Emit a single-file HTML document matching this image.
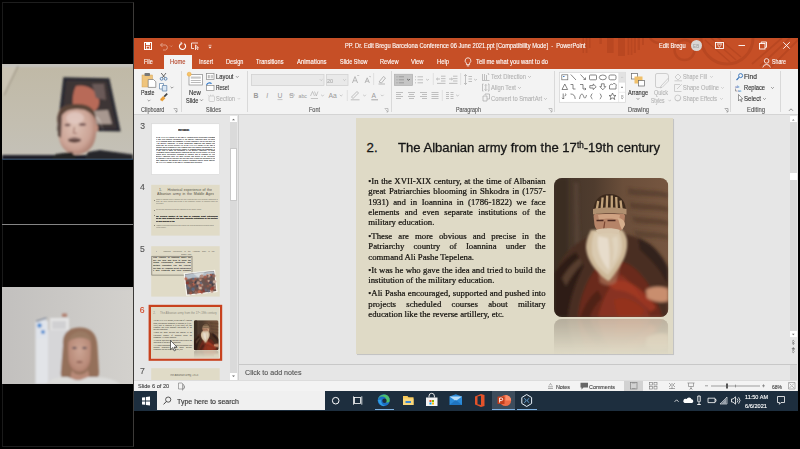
<!DOCTYPE html>
<html><head><meta charset="utf-8">
<style>
*{margin:0;padding:0;box-sizing:border-box}
html,body{width:800px;height:449px;background:#000;overflow:hidden;position:relative;font-family:"Liberation Sans",sans-serif}
.a{position:absolute}
.t{position:absolute;white-space:nowrap;line-height:1;transform-origin:0 50%;-webkit-text-stroke-width:0.12px}
#scr{left:134px;top:38px;width:664px;height:373px;background:#e6e6e6;overflow:hidden;filter:blur(0.3px)}
svg{display:block}
.sep{position:absolute;width:1px;background:#d9d9d9;top:33px;height:41px}
.sl{position:absolute;white-space:nowrap;line-height:1;font-family:"Liberation Serif",serif;color:#14120e;-webkit-text-stroke:0.22px #14120e;transform:scaleY(1.06);transform-origin:0 84%}
</style></head>
<body>
<div class="a" style="left:2px;top:2px;width:132px;height:445px;border-left:1.5px solid #1a1a1a;border-top:1px solid #1e1e1e;border-bottom:1px solid #1e1e1e;border-right:1px solid #3c3a38"></div>
<div class="a" style="left:2px;top:224px;width:131px;height:1px;background:#858585"></div>
<!-- VIDEO 1 -->
<svg class="a" style="left:2px;top:64px" width="131" height="96" viewBox="2 64 131 96">
  <defs>
    <filter id="vb" x="-10%" y="-10%" width="120%" height="120%"><feGaussianBlur stdDeviation="0.8"/></filter>
    <filter id="vb2" x="-10%" y="-10%" width="120%" height="120%"><feGaussianBlur stdDeviation="1.6"/></filter>
    <linearGradient id="w1" x1="0" y1="0" x2="0" y2="1">
      <stop offset="0" stop-color="#c0b9a6"/><stop offset="0.6" stop-color="#c3beb0"/><stop offset="1" stop-color="#c4c1b8"/>
    </linearGradient>
    <radialGradient id="face1" cx="0.45" cy="0.45" r="0.6">
      <stop offset="0" stop-color="#dcc0b4"/><stop offset="0.7" stop-color="#cca496"/><stop offset="1" stop-color="#a87a6c"/>
    </radialGradient>
  </defs>
  <rect x="2" y="64" width="131" height="96" fill="url(#w1)"/>
  <g filter="url(#vb)">
    <path d="M2 64 H18 L4 95 H2 Z" fill="#cbc4b4"/>
    <rect x="2" y="64" width="131" height="2.8" fill="#c4c4c2"/>
    <path d="M18 66 L4 95" stroke="#8f8676" stroke-width="1"/>
    <!-- frame -->
    <path d="M63.3 77.2 L109.4 78.2 L120.7 131.5 L57.2 130.5 Z" fill="#2a2a30"/>
    <path d="M66.5 80.5 L106.5 81.3 L116.5 128.5 L61 127.6 Z" fill="#3e3434"/>
    <path d="M76 86 C84 84 94 88 98 96 C101 104 98 110 92 112 L74 113 C72 104 72 94 76 86 Z" fill="#b86a58"/>
    <path d="M92 84 L104 84 L106 100 L96 98 Z" fill="#6a5a58"/>
    <path d="M90 111 L108 110 L112 124 L90 124 Z" fill="#a89890"/>
    <!-- head -->
    <path d="M74 110 C84 108 94 112 100 120 L104 132 L100 122 C94 114 84 112 74 113 Z" fill="#d8d0c8" opacity="0.8"/>
    <path d="M57.5 120 C57 108 64 104.5 77 104.5 C90 104.5 95.5 110 96 120 L96 134 C95 146 88 154 77 154.5 C66 154.5 59 146 58.5 134 Z" fill="url(#face1)"/>
    <path d="M57.5 122 C57 108 64 104 77 104 C90 104 95.5 109 96 120 C92 112 85 109 77 109 C68 109 61 112 58.5 124 Z" fill="#5a4438"/>
    <path d="M57.5 116 L58 136 L61 138 L62 114 Z" fill="#5a4640"/>
    <ellipse cx="75" cy="118" rx="9" ry="6" fill="#e4ccc4" opacity="0.7"/>
    <ellipse cx="96" cy="128" rx="2.2" ry="4" fill="#c09080"/>
    <ellipse cx="67.5" cy="125" rx="3" ry="1.2" fill="#6a4a48"/>
    <ellipse cx="82.5" cy="124.5" rx="3.6" ry="1.2" fill="#6a4a48"/>
    <path d="M74.5 127 L73.5 133 L77 133.5" fill="none" stroke="#9a6a60" stroke-width="1.1"/>
    <ellipse cx="74.5" cy="140" rx="6.5" ry="2.6" fill="#4a2a28"/>
    <path d="M69 139 H80" stroke="#d8c0b8" stroke-width="0.8"/>
    <path d="M64 153 C70 158 84 158 91 153 L94 160 H62 Z" fill="#c09484"/>
    <!-- bottom dark -->
    <path d="M2 155 H133 V160 H2 Z" fill="#1c1f26"/>
    <path d="M56 154 L72 152 L77 160 L50 160 Z" fill="#222"/>
    <path d="M88 152 L100 150 L133 154.5 V160 H84 Z" fill="#26262c"/>
  </g>
  <rect x="2" y="158.6" width="131" height="1.4" fill="#2a4058"/>
</svg>
<!-- VIDEO 2 -->
<svg class="a" style="left:2px;top:287px" width="131" height="97" viewBox="2 287 131 97">
  <defs>
    <linearGradient id="w2" x1="0" y1="0" x2="1" y2="0">
      <stop offset="0" stop-color="#c2c0be"/><stop offset="0.5" stop-color="#cac8c5"/><stop offset="1" stop-color="#d3d1cd"/>
    </linearGradient>
    <radialGradient id="face2" cx="0.5" cy="0.45" r="0.6">
      <stop offset="0" stop-color="#cca594"/><stop offset="0.8" stop-color="#b88a78"/><stop offset="1" stop-color="#a07060"/>
    </radialGradient>
  </defs>
  <rect x="2" y="287" width="131" height="97" fill="url(#w2)"/>
  <g filter="url(#vb)">
    <rect x="2" y="287" width="131" height="1.5" fill="#c8c6c4"/>
    <!-- shelf / appliance -->
    <rect x="50" y="318" width="19" height="12" fill="#e4e4e4"/>
    <rect x="52" y="321" width="14" height="8" fill="#d0d0d2"/>
    <rect x="62" y="313.5" width="5" height="3.5" fill="#b08070"/>
    <rect x="47" y="330" width="22" height="54" fill="#d6d6d8"/>
    <rect x="35.5" y="321" width="12.5" height="63" fill="#e2e4e8"/>
    <path d="M36 321 L46 317.5 L47 338 L36 339 Z" fill="#dfe3ea"/>
    <circle cx="39.5" cy="325.5" r="2.2" fill="#4a8ad0"/>
    <circle cx="43" cy="332" r="2" fill="#4a8ad0"/>
    <path d="M36 321.5 L46.5 318" stroke="#3a4a66" stroke-width="1"/>
    <!-- hair -->
    <path d="M63 345 C62 332 70 327.5 80 327.5 C91 327.5 97 334 97.5 346 L99 372 C99 378 96 380 92 380 L66 380 C62 380 60 376 61 370 Z" fill="#94705a"/>
    <!-- face -->
    <path d="M68 345 C68 337 73 333 80 333 C87 333 91 338 91 346 L90.5 360 C89.5 368 85 372 79.5 372 C73 372 69 367 68.5 360 Z" fill="url(#face2)"/>
    <path d="M68 342 C70 334 76 331.5 81 331.5 C87 331.5 91 336 91.5 342 C86 337 76 336 68 342 Z" fill="#9a7a64"/>
    <ellipse cx="74.5" cy="348" rx="2.2" ry="1" fill="#4a4050"/>
    <ellipse cx="84.5" cy="348" rx="2.2" ry="1" fill="#4a4050"/>
    <ellipse cx="79.5" cy="362" rx="3.2" ry="1" fill="#8a5a50"/>
    <path d="M72 370 C75 376 84 376 88 370 L90 380 H70 Z" fill="#b88a78"/>
    <!-- shirt -->
    <path d="M46 384 C50 378 60 376.5 68 377 L78 381 L88 377 C100 376.5 114 378 120 384 Z" fill="#dcdcda"/>
  </g>
</svg>

<div class="a" id="scr">
<!-- title bar + tabs bg -->
<div class="a" style="left:0;top:0;width:664px;height:31px;background:#c64f26"></div>
<svg class="a" style="left:440px;top:0" width="224" height="31" viewBox="0 0 224 31">
  <g fill="#b0421e" opacity="0.55">
    <rect x="8.5" y="0" width="1.5" height="15"/><rect x="11.6" y="0" width="1.9" height="15"/><rect x="14.8" y="0" width="1.8" height="10"/>
    <rect x="25.4" y="0" width="2.5" height="6"/><rect x="33" y="0" width="6.7" height="15"/><rect x="44" y="0" width="7" height="18"/>
    <rect x="53.5" y="0" width="1.9" height="17"/><rect x="56.6" y="0" width="1.9" height="17"/><rect x="59.75" y="0" width="2.2" height="15"/>
    <rect x="63.5" y="0" width="2.5" height="12"/><rect x="68" y="0" width="2" height="7"/>
  </g>
  <g fill="none" stroke="#b0421e" opacity="0.6">
    <path d="M76 0 A12 12 0 0 0 87 5" stroke-width="2.5"/>
    <circle cx="110.5" cy="12" r="10" stroke-width="2.5"/>
    <circle cx="153" cy="0" r="26" stroke-width="3"/>
    <path d="M131 2 L156 24 M137 0 L162 22 M143 -1 L167 19" stroke-width="1.6"/>
    <path d="M216 0 L186 28 M224 2 L196 30 M208 0 L178 26" stroke-width="1.8"/>
  </g>
</svg>
<!-- QAT -->
<svg class="a" style="left:8px;top:3px" width="200" height="10" viewBox="0 0 200 10">
  <g fill="none" stroke="#fff" stroke-width="1">
    <rect x="2.5" y="1.5" width="7" height="7"/>
  </g>
  <rect x="4" y="2" width="4" height="2.2" fill="#fff"/>
  <rect x="4.5" y="5.5" width="3" height="2.5" fill="none" stroke="#fff" stroke-width="0.7"/>
  <g fill="none" stroke="#e4a68e" stroke-width="0.9">
    <path d="M18.5 4 H23.5 A2.6 2.6 0 0 1 23.5 9 H21"/><path d="M20.5 2 L18.5 4 L20.5 6"/>
    <path d="M28 4.5 L29.2 5.7 L30.4 4.5" stroke-width="0.6"/>
  </g>
  <g fill="none" stroke="#fff" stroke-width="1.1" transform="translate(0.3,-0.8)">
    <path d="M39.2 3.2 A3.1 3.1 0 1 0 42 3.6"/><path d="M38.2 1.6 L39.8 3.2 L38 4.8" stroke-width="0.9"/>
  </g>
  <g fill="none" stroke="#fff" stroke-width="0.8">
    <path d="M49.5 2 H56 M49.5 2 V7.5 H52"/><path d="M53.5 4 V9 M53.5 4 L56.5 6.8 H54.5 L56 9"/>
  </g>
  <path d="M66.5 5.8 L69.5 5.8 L68 7.4 Z" fill="#fff"/><path d="M66.5 4.3 H69.5" stroke="#fff" stroke-width="0.6"/>
</svg>
<!-- avatar -->
<div class="a" style="left:557px;top:2.3px;width:11.2px;height:11.2px;border-radius:50%;background:#d9d6d4"></div>
<!-- window controls -->
<svg class="a" style="left:580px;top:2px" width="84" height="12" viewBox="0 0 84 12">
  <g fill="none" stroke="#fff" stroke-width="0.9">
    <rect x="1.5" y="2.5" width="8" height="6"/><path d="M3.6 5.2 L5.5 7 L7.4 5.2 M3 4 H8"/>
    <path d="M24.5 5.5 H31"/>
    <rect x="45.5" y="3.5" width="5.5" height="5.5"/><path d="M47.2 3.5 V2 H52.5 V7.3 H51"/>
    <path d="M69.3 2.2 L75.8 8.7 M75.8 2.2 L69.3 8.7"/>
  </g>
</svg>
<!-- home tab -->
<div class="a" style="left:30px;top:17px;width:28px;height:15px;background:#f3f3f3"></div>
<!-- lightbulb -->
<svg class="a" style="left:330px;top:19px" width="8" height="10" viewBox="0 0 8 10">
  <path d="M4 0.8 A2.9 2.9 0 0 1 5.6 6.1 V7.6 H2.4 V6.1 A2.9 2.9 0 0 1 4 0.8 Z M2.8 8.9 H5.2" fill="none" stroke="#fff" stroke-width="0.8"/>
</svg>
<!-- share icon -->
<svg class="a" style="left:628px;top:19.5px" width="10" height="10" viewBox="0 0 10 10">
  <circle cx="4.6" cy="2.9" r="2.3" fill="none" stroke="#fff" stroke-width="0.8"/>
  <path d="M0.8 9.5 A3.9 3.9 0 0 1 8.4 9.5" fill="none" stroke="#fff" stroke-width="0.8"/>
</svg>

<!-- ribbon -->
<div class="a" style="left:0;top:31px;width:664px;height:45.5px;background:#f3f3f3;border-bottom:1px solid #d4d4d4"></div>
<div class="sep" style="left:46.5px"></div>
<div class="sep" style="left:112.8px"></div>
<div class="sep" style="left:256.5px"></div>
<div class="sep" style="left:420.4px"></div>
<div class="sep" style="left:596.2px"></div>
<div class="sep" style="left:646px"></div>
<!-- ribbon icons -->
<svg class="a" style="left:0;top:31px" width="664" height="45" viewBox="0 31 664 45">
  <!-- paste -->
  <rect x="8" y="37" width="10.5" height="12" fill="#efc47c" stroke="#d4a45a" stroke-width="0.5"/>
  <rect x="10.5" y="35" width="5.5" height="3" rx="0.8" fill="#777"/>
  <path d="M14.2 41.5 H19.5 L21.8 43.8 V49.4 H14.2 Z" fill="#fff" stroke="#777" stroke-width="0.7"/>
  <path d="M13.6 61.8 L15.0 63.2 L16.4 61.8" fill="none" stroke="#666" stroke-width="0.6"/>
  <!-- scissors -->
  <g fill="none" stroke="#3d6fa6" stroke-width="0.8">
    <circle cx="27.6" cy="40.8" r="1.4"/><circle cx="31.6" cy="40.8" r="1.4"/>
  </g>
  <path d="M28.4 39.6 L32 35 M30.8 39.6 L27.2 35" stroke="#444" stroke-width="0.8"/>
  <!-- copy -->
  <path d="M25.5 45.5 H29.5 V51 H25.5 Z" fill="#fff" stroke="#5a7fa8" stroke-width="0.7"/>
  <path d="M28.3 47.5 H32.8 V53 H28.3 Z" fill="#dbe7f3" stroke="#5a7fa8" stroke-width="0.7"/>
  <path d="M36.6 48.8 L38.0 50.2 L39.4 48.8" fill="none" stroke="#555" stroke-width="0.6"/>
  <!-- format painter -->
  <path d="M26 61.2 L29.2 58 L31.4 60.2 L28.2 63.4 Z" fill="#eba13b"/><path d="M26.8 62.4 L28 61.2" stroke="#c47a1a" stroke-width="0.6"/>
  <path d="M29.6 58 L32.6 55 L33.8 56.2 L30.8 59.2 Z" fill="#444"/>
  <!-- launcher -->
  <path d="M39.6 70.5 H43 V74 M40.5 71.5 L43 74 M41.5 74 H43" fill="none" stroke="#777" stroke-width="0.5"/>
  <!-- new slide -->
  <rect x="55" y="36.5" width="13.5" height="10.5" fill="#fff" stroke="#888" stroke-width="0.7"/>
  <rect x="56.8" y="38.5" width="10" height="2.2" fill="#c8c8c8"/>
  <rect x="56.8" y="42" width="10" height="0.8" fill="#aaa"/><rect x="56.8" y="44" width="10" height="0.8" fill="#aaa"/>
  <circle cx="55.2" cy="36.2" r="2" fill="#f7c46a" stroke="#e8a33a" stroke-width="0.5"/>
  <!-- layout -->
  <rect x="72.5" y="35.5" width="7.5" height="6" fill="#fff" stroke="#8a8a8a" stroke-width="0.7"/>
  <rect x="73.8" y="37" width="2" height="3.3" fill="#bbb"/><rect x="76.6" y="37" width="2.4" height="3.3" fill="#ccc"/>
  <path d="M102.0 38.2 L103.3 39.5 L104.6 38.2" fill="none" stroke="#555" stroke-width="0.6"/>
  <!-- reset -->
  <rect x="72.5" y="47.5" width="7.5" height="5" fill="#fff" stroke="#8a8a8a" stroke-width="0.7"/>
  <path d="M72.6 47 A3.2 3.2 0 0 1 77.6 45.6" fill="none" stroke="#2f77c8" stroke-width="1.1"/>
  <!-- section (disabled) -->
  <rect x="75" y="58" width="5.5" height="5.5" rx="1" fill="none" stroke="#c2c2c2" stroke-width="0.7"/>
  <path d="M73.8 57 L75 58.2 M76.5 56.6 V58 M79 56.6 V58" stroke="#c2c2c2" stroke-width="0.6"/>
  <path d="M103.6 60.0 L104.9 61.3 L106.2 60.0" fill="none" stroke="#c0c0c0" stroke-width="0.6"/>
  <!-- new slide chevron -->
  <path d="M66.1 61.4 L67.5 62.8 L68.9 61.4" fill="none" stroke="#555" stroke-width="0.6"/>
  <!-- font name/size boxes -->
  <rect x="117.5" y="36.5" width="72.5" height="11" fill="#e9e9e9" stroke="#d2d2d2" stroke-width="0.8"/>
  <rect x="192.5" y="36.5" width="21.5" height="11" fill="#e9e9e9" stroke="#d2d2d2" stroke-width="0.8"/>
  <path d="M185.9 41.3 L187.2 42.6 L188.5 41.3 M209.2 41.3 L210.5 42.6 L211.8 41.3" fill="none" stroke="#b0b0b0" stroke-width="0.6"/>
  <!-- small separators -->
  <path d="M239.6 35 V47 M213.3 52 V63 M299.3 35 V47 M326.6 35 V47 M308.3 52 V63" stroke="#dadada" stroke-width="0.8"/>
  <!-- A^ A- -->
  <g fill="none" stroke="#a8a8a8" stroke-width="0.8">
    <path d="M218.4 45 L221 38.6 L223.6 45 M219.4 42.8 H222.6"/>
    <path d="M223.2 38 L224.2 37 L225.2 38" stroke-width="0.6"/>
    <path d="M231 45 L233.2 39.8 L235.4 45 M231.8 43.2 H234.6"/>
    <path d="M235.2 38.2 L236.1 39 L237 38.2" stroke-width="0.6"/>
    <!-- clear formatting -->
    <path d="M245 44 L249.5 38.5 L251.5 40 L247.5 45 Z M244.5 46 H251"/>
  </g>
  <!-- row 2 font -->
  <g fill="#9a9a9a" font-family="Liberation Sans" font-size="6.8">
    <text x="119.6" y="59.8" font-weight="bold">B</text>
    <text x="132.2" y="59.8" font-style="italic">I</text>
    <text x="143.4" y="59.8">U</text>
    <text x="155.2" y="59.8">S</text>
    <text x="164.6" y="59.6" font-size="5.2">abc</text>
    <text x="194.5" y="59.8">Aa</text>
    <text x="237.5" y="59.8">A</text>
  </g>
  <g fill="none" stroke="#a6a6a6" stroke-width="0.6">
    <path d="M143.5 61.6 H148.5 M155 57 H161"/>
    <path d="M176.5 58 L178.5 53.5 L180.5 58 M180.5 53.5 L182.3 58 L184 53.5 M176.8 60.5 H184"/>
    <path d="M187.2 56.8 L188.5 58.1 L189.8 56.8 M205.9 56.8 L207.2 58.1 L208.5 56.8 M229.2 56.8 L230.5 58.1 L231.8 56.8 M247.0 56.8 L248.3 58.1 L249.6 56.8"/>
    <path d="M217.5 59 L223 53.5 L224.5 55 L219 60.5 Z M216.8 61.8 H225.5" stroke-width="0.7"/>
    <path d="M237.3 61.8 H244" stroke-width="1"/>
  </g>
  <!-- bullets selected -->
  <rect x="260.3" y="36.2" width="18.4" height="11.4" fill="#c5c5c5" stroke="#ababab" stroke-width="0.6"/>
  <g stroke="#8a8a8a" stroke-width="0.7">
    <path d="M262.5 38.8 H263.5 M264.8 38.8 H270 M262.5 41.8 H263.5 M264.8 41.8 H270 M262.5 44.8 H263.5 M264.8 44.8 H270"/>
  </g>
  <path d="M273.2 41 L274.5 42.3 L275.8 41" fill="none" stroke="#444" stroke-width="0.8"/>
  <g stroke="#a8a8a8" stroke-width="0.7" fill="none">
    <path d="M281 38.8 H282 M283.5 38.8 H289 M281 41.8 H282 M283.5 41.8 H289 M281 44.8 H282 M283.5 44.8 H289"/>
    <path d="M292.2 41.0 L293.5 42.3 L294.8 41.0"/>
    <!-- indents -->
    <path d="M307 38.2 H311.5 M307 40.6 H311.5 M307 43 H311.5 M303 45.4 H311.5 M306 41 H302.5 M303.8 39.8 L302.5 41 L303.8 42.2"/>
    <path d="M319 38.2 H323.5 M319 40.6 H323.5 M319 43 H323.5 M315 45.4 H323.5 M315 41 H318.5 M317.2 39.8 L318.5 41 L317.2 42.2"/>
    <!-- line spacing -->
    <path d="M331.5 36.5 V46.5 M330 38 L331.5 36.5 L333 38 M330 45 L331.5 46.5 L333 45 M334.5 38.5 H338 M334.5 41 H338 M334.5 43.5 H338"/>
    <path d="M340.2 41.0 L341.5 42.3 L342.8 41.0"/>
    <!-- align row -->
    <path d="M262 54.5 H269 M262 56.5 H267 M262 58.5 H269 M262 60.5 H267"/>
    <path d="M274 54.5 H281 M275 56.5 H280 M274 58.5 H281 M275 60.5 H280"/>
    <path d="M286 54.5 H293 M288 56.5 H293 M286 58.5 H293 M288 60.5 H293"/>
    <path d="M297.5 54.5 H304.5 M297.5 56.5 H304.5 M297.5 58.5 H304.5 M297.5 60.5 H304.5"/>
    <path d="M312 54.5 H315 M316.5 54.5 H319.5 M312 56.5 H315 M316.5 56.5 H319.5 M312 58.5 H315 M316.5 58.5 H319.5 M312 60.5 H315 M316.5 60.5 H319.5"/>
    <path d="M322.2 56.8 L323.5 58.1 L324.8 56.8"/>
    <!-- text direction etc icons -->
    <path d="M348.5 36 V42 M350.5 36 V42 M352.5 37 V42 M348 42.5 H355.5 M354 35 L355 37"/>
    <path d="M348.5 46 H349.5 M348.5 46 V53 H349.5 M355 46 H354 M355 46 V53 H354 M351.8 46.5 V52.5 M350.8 47.5 L351.8 46.5 L352.8 47.5 M350.4 51.3 L351.8 52.7 L353.2 51.3"/>
    <path d="M349 58 H353 V63 H349 Z M351 57 V56 H355.5 V61 H353"/>
    <path d="M394.2 38.2 L395.5 39.5 L396.8 38.2 M384.2 49.2 L385.5 50.5 L386.8 49.2 M410.2 60.2 L411.5 61.5 L412.8 60.2"/>
    <path d="M414.6 70.5 H418 V74 M415.5 71.5 L418 74 M416.5 74 H418"/>
    <path d="M250.6 70.5 H254 V74 M251.5 71.5 L254 74 M252.5 74 H254"/>
  </g>
  <!-- shapes gallery -->
  <rect x="425.5" y="34.3" width="66" height="30" fill="#fff" stroke="#d3d3d3" stroke-width="0.7"/>
  <rect x="484.8" y="34.6" width="6.5" height="9.6" fill="#e2e2e2"/>
  <path d="M484.6 34.3 V64.3 M484.8 44.3 H491.5 M484.8 54.3 H491.5" stroke="#dedede" stroke-width="0.6"/>
  <path d="M487.2 39.8 L488.1 38.9 L489 39.8" fill="none" stroke="#bbb" stroke-width="0.6"/>
  <rect x="487.3" y="48.8" width="1.4" height="1" fill="#444"/>
  <path d="M487 58 H489.4 M487 59.6 L488.2 60.6 L489.4 59.6" fill="none" stroke="#444" stroke-width="0.6"/>
  <g fill="none" stroke="#555" stroke-width="0.7">
    <rect x="427.8" y="36.8" width="6" height="5" stroke="#6a6a6a"/>
    <path d="M429 38.5 L430.5 38.5" stroke="#3f7fc8" stroke-width="1"/>
    <path d="M436.8 36.5 L442 42 M446.5 36.5 L451.2 41.5 M449.5 41.5 H451.5 V39.5"/>
    <rect x="455.5" y="37" width="7" height="4.8" rx="0.8"/>
    <ellipse cx="468.8" cy="39.4" rx="3.5" ry="2.4"/>
    <rect x="475" y="37" width="7" height="4.8" rx="1.5"/>
    <path d="M428 51.5 L430.8 46 L433.6 51.5 Z"/>
    <path d="M436.5 46.5 H439 V51 H441.5"/>
    <path d="M446 46.5 H449 V51 H452 M450.8 50 L452 51 L450.8 52"/>
    <path d="M455.8 47.6 H459.2 V46 L462.2 48.8 L459.2 51.6 V50 H455.8 Z"/>
    <path d="M467.4 45.8 H470.2 V48.6 H471.8 L468.8 51.8 L465.8 48.6 H467.4 Z"/>
    <path d="M475.5 51 V48 A2 2 0 0 1 478.5 46.5 A2 2 0 0 1 482 48.5 V51 Z"/>
    <path d="M429.2 55.5 V61 M428 59.8 L429.2 61 L430.4 59.8 M431 55.5 C432.5 56.5 432.5 57.5 430.5 58"/>
    <path d="M436.5 56 C439.5 56 441 57.5 441.2 61"/>
    <path d="M445.5 61 C446.5 55 448.5 55 449.5 58 C450.5 61 451.5 61 452.5 57"/>
    <path d="M458.4 55.6 C457.2 55.6 457.6 58.3 456.6 58.3 C457.6 58.3 457.2 61 458.4 61"/>
    <path d="M465.8 55.6 C467 55.6 466.6 58.3 467.6 58.3 C466.6 58.3 467 61 465.8 61"/>
    <path d="M478.5 55 L479.5 57.4 L482 57.5 L480 59 L480.8 61.5 L478.5 60 L476.2 61.5 L477 59 L475 57.5 L477.5 57.4 Z"/>
  </g>
  <!-- arrange -->
  <rect x="497.5" y="35.5" width="6" height="5.5" fill="#fff" stroke="#666" stroke-width="0.7"/>
  <rect x="500.5" y="38.5" width="8" height="7" fill="#f0c06a"/>
  <rect x="504.5" y="42.5" width="6" height="5.5" fill="#fff" stroke="#666" stroke-width="0.7"/>
  <path d="M502.7 60.2 L504.0 61.5 L505.3 60.2" fill="none" stroke="#555" stroke-width="0.6"/>
  <!-- quick styles (disabled) -->
  <g fill="none" stroke="#c4c4c4" stroke-width="0.8">
    <path d="M521.5 37 Q521.5 35.5 523 35.5 H532 Q534.5 35.5 534.5 38 V43 L528 49.5 H523 Q521.5 49.5 521.5 48 Z"/>
    <path d="M534.5 40 L527 48 L526 50 L528 49"/>
    <path d="M534.4 61.8 L535.7 63.1 L537.0 61.8"/>
    <!-- shape fill/outline/effects icons -->
    <path d="M541 39 L544 36 L547 39 L544 42 Z M540.5 42.8 H548"/>
    <path d="M540.5 53.5 V46.5 H546 M540.5 53.5 H547.5 M543 51 L547.8 46.2"/>
    <circle cx="543.8" cy="60" r="3"/><path d="M541.2 61.4 A3 3 0 0 0 546.6 59.2"/>
    <path d="M576.2 38.2 L577.5 39.5 L578.8 38.2 M587.2 49.2 L588.5 50.5 L589.8 49.2 M586.2 60.2 L587.5 61.5 L588.8 60.2"/>
    <path d="M590.6 70.5 H594 V74 M591.5 71.5 L594 74 M592.5 74 H594" stroke="#999"/>
  </g>
  <!-- editing -->
  <circle cx="606.6" cy="37.6" r="2" fill="none" stroke="#2f6fb8" stroke-width="0.9"/>
  <path d="M605 39.4 L602.5 42" stroke="#2f6fb8" stroke-width="1.1"/>
  <g font-family="Liberation Sans" font-size="3.8" fill="#2f6fb8"><text x="601" y="49.8">ab</text><text x="603.5" y="53.8">ac</text></g>
  <path d="M601.5 50.5 V53 H603" fill="none" stroke="#555" stroke-width="0.5"/>
  <path d="M637.2 49.2 L638.5 50.5 L639.8 49.2 M629.2 60.2 L630.5 61.5 L631.8 60.2" fill="none" stroke="#555" stroke-width="0.6"/>
  <path d="M604.5 56.5 V63 L606 61.4 L607.3 63.8 L608 63.4 L606.8 61 L608.8 61 Z" fill="#fff" stroke="#555" stroke-width="0.6"/>
  <path d="M655 72.8 L657 70.8 L659 72.8" fill="none" stroke="#666" stroke-width="0.7"/>
</svg>

<!-- slide panel -->
<div class="a" style="left:0;top:76.5px;width:103.6px;height:265.5px;background:#e6e6e6"></div>
<div class="a" style="left:103.6px;top:76.5px;width:1px;height:265.5px;background:#cfcfcf"></div>
<!-- panel scrollbar -->
<div class="a" style="left:95.5px;top:77.5px;width:7px;height:264px;background:#dadada"></div>
<div class="a" style="left:95.5px;top:77.6px;width:7px;height:6.6px;background:#fff"></div>
<div class="a" style="left:95.5px;top:109.6px;width:7px;height:53px;background:#fff;border:0.6px solid #c8c8c8"></div>
<div class="a" style="left:95.5px;top:335px;width:7px;height:6.5px;background:#fff"></div>
<svg class="a" style="left:95.5px;top:77.5px" width="7" height="264" viewBox="0 0 7 264">
  <path d="M2 4.2 L3.5 2.7 L5 4.2 Z" fill="#666"/>
  <path d="M2 259.5 L3.5 261 L5 259.5 Z" fill="#666"/>
</svg>

<!-- main right scrollbar -->
<div class="a" style="left:656.4px;top:77.5px;width:6.6px;height:265px;background:#dadada"></div>
<div class="a" style="left:656.4px;top:78.2px;width:6.6px;height:5.8px;background:#fff"></div>
<div class="a" style="left:656.4px;top:134.5px;width:6.6px;height:7.7px;background:#fff"></div>
<div class="a" style="left:656.4px;top:293px;width:6.6px;height:5.5px;background:#fff"></div>
<div class="a" style="left:656.4px;top:298.5px;width:6.6px;height:27.5px;background:#e6e6e6"></div>
<svg class="a" style="left:656.4px;top:77.5px" width="7" height="250" viewBox="0 0 7 250">
  <path d="M2 4.6 L3.3 3.2 L4.6 4.6 Z" fill="#666"/>
  <path d="M2 217.8 L3.3 219.2 L4.6 217.8 Z" fill="#666"/>
  <path d="M2 225.5 L3.3 224.3 L4.6 225.5 M2 227.5 L3.3 226.3 L4.6 227.5 M3.3 226.3 V229" fill="none" stroke="#555" stroke-width="0.6"/>
  <path d="M2 233.5 L3.3 234.7 L4.6 233.5 M2 235.5 L3.3 236.7 L4.6 235.5 M1.8 232.5 H4.8 M3.3 231 V234" fill="none" stroke="#555" stroke-width="0.6"/>
</svg>
<!-- notes -->
<div class="a" style="left:105px;top:326px;width:558px;height:0.8px;background:#c8c8c8"></div>

<!-- status bar -->
<div class="a" style="left:0;top:342px;width:662.8px;height:11px;background:#f3f3f3;border-top:0.6px solid #dcdcdc"></div>
<div class="a" style="left:490px;top:342.5px;width:18.5px;height:10.5px;background:#d2d2d2"></div>
<svg class="a" style="left:0;top:342px" width="664" height="11" viewBox="0 342 664 11">
  <g fill="none" stroke="#777" stroke-width="0.6">
    <path d="M44.5 345 H48 L50 347 V351 H44.5 Z M48.5 346 V352.5 M49.5 347.5 L51 349 L49.5 350.5"/>
    <path d="M414 350.5 H419 M414 348.8 H419 M415.2 347.5 L416.5 345.5 L417.8 347.5"/>
    <path d="M498 345 H501.5 M498 350.5 H501.5" stroke="#888"/>
    <rect x="496.5" y="344.5" width="6.5" height="6.5" stroke="#777"/>
    <rect x="515.5" y="344.5" width="3" height="2.5"/><rect x="520" y="344.5" width="3" height="2.5"/>
    <rect x="515.5" y="348.5" width="3" height="2.5"/><rect x="520" y="348.5" width="3" height="2.5"/>
    <path d="M535 345 L537 347 L535 349 M541 345 L539 347 L541 349 M535 350.5 H541 M538 345 V351"/>
    <path d="M553.5 345 H560.5 M554.5 345 V348.5 H559.5 V345 M557 348.5 V351.5 M555.5 351.5 L557 350 L558.5 351.5"/>
    <path d="M571 347.8 H574 M577 348 H626 M601.5 346.6 V349.4 M628 347.8 H631 M629.5 346.3 V349.3" stroke="#666"/>
    <path d="M654.5 344.5 H661 V351 H654.5 Z M655.5 345.5 L657.5 347.5 M660 345.5 L658 347.5 M655.5 350 L657.5 348 M660 350 L658 348" stroke="#888"/>
  </g>
  <path d="M446.5 344.8 H454 V349.5 H449.5 L447.5 351.5 V349.5 H446.5 Z" fill="#666"/>
  <rect x="592" y="345.5" width="2" height="5" fill="#555"/>
</svg>

<!-- taskbar -->
<div class="a" style="left:0;top:353.2px;width:664px;height:19.8px;background:#1d2e3e"></div>
<div class="a" style="left:23px;top:353.4px;width:167.5px;height:19px;background:#f0f0f0"></div>
<div class="a" style="left:357.5px;top:353.2px;width:23.2px;height:19px;background:#3c4c5c"></div>
<div class="a" style="left:240.5px;top:370.8px;width:19.2px;height:1.2px;background:#7fb1e0"></div>
<div class="a" style="left:358px;top:370.8px;width:22.5px;height:1.2px;background:#7fb1e0"></div>
<div class="a" style="left:383px;top:370.8px;width:20px;height:1.2px;background:#7fb1e0"></div>
<svg class="a" style="left:0;top:353px" width="664" height="20" viewBox="0 353 664 20">
  <!-- windows logo -->
  <g fill="#fff">
    <path d="M8 359.6 L11.2 359.2 V362.6 H8 Z M12 359.1 L16 358.6 V362.6 H12 Z M8 363.4 H11.2 V366.8 L8 366.4 Z M12 363.4 H16 V367.4 L12 366.9 Z"/>
  </g>
  <!-- search icon -->
  <circle cx="34.2" cy="361.6" r="2.6" fill="none" stroke="#333" stroke-width="0.8"/>
  <path d="M32.4 363.4 L29.6 366.4" stroke="#333" stroke-width="0.9"/>
  <!-- cortana -->
  <circle cx="201.7" cy="362.7" r="3.3" fill="none" stroke="#fff" stroke-width="1"/>
  <!-- task view -->
  <g fill="none" stroke="#fff" stroke-width="0.8">
    <rect x="220.5" y="359.5" width="6" height="6"/>
    <path d="M219.5 358.3 V366.7 M227.8 358.3 V366.7"/>
  </g>
  <!-- edge -->
  <circle cx="249.7" cy="362.2" r="6" fill="#1b6fc6"/>
  <path d="M244 362 A6 6 0 0 1 255.6 360.5 L255.6 363.5 C254.5 365 251 364.8 249.8 363 C252 362 253 359.5 249 358.5 C246 358 244.5 360 244 362 Z" fill="#4fbf6a"/>
  <circle cx="250.5" cy="362.8" r="2.2" fill="#1d2e3e"/>
  <path d="M244 362 C244.5 366 248 368.5 251.5 368 C248 367 246.5 364 247.5 361.5" fill="#2ea0e6"/>
  <!-- explorer -->
  <path d="M269 358 H273.5 L274.5 359.2 H279.5 V367 H269 Z" fill="#f7c85a"/>
  <rect x="269" y="360.5" width="10.5" height="6.5" fill="#fad77a"/>
  <rect x="271.5" y="363" width="5.5" height="2" fill="#3f88d0"/>
  <!-- store -->
  <path d="M292 359.5 H303.5 V368 H292 Z" fill="#f3f3f3"/>
  <path d="M295 359.5 V358 A2.7 2.7 0 0 1 300.4 358 V359.5" fill="none" stroke="#f3f3f3" stroke-width="0.9"/>
  <rect x="295.5" y="362" width="2" height="2" fill="#f25022"/><rect x="298" y="362" width="2" height="2" fill="#7fba00"/>
  <rect x="295.5" y="364.5" width="2" height="2" fill="#00a4ef"/><rect x="298" y="364.5" width="2" height="2" fill="#ffb900"/>
  <!-- mail -->
  <path d="M315.5 358.5 L321.8 356.3 L328 358.5 V367 H315.5 Z" fill="#2b8ad8"/>
  <path d="M315.5 358.5 L321.8 363 L328 358.5" fill="#b8dcf7"/>
  <path d="M315.5 367 L321.8 362 L328 367" fill="#1f74c0"/>
  <!-- office -->
  <path d="M341 358.5 L347 356 L350.5 357 V368 L347 369 L341 366.5 Z" fill="#e3522a"/>
  <path d="M343.5 358.6 L347 357.8 V367 L343.5 366.2 Z" fill="#1d2e3e"/>
  <!-- powerpoint -->
  <circle cx="371.5" cy="362.5" r="5.6" fill="#ed6c47"/>
  <path d="M371.5 356.9 A5.6 5.6 0 0 1 377.1 362.5 H371.5 Z" fill="#ff8f6b"/>
  <rect x="363.5" y="358.5" width="7" height="7.5" rx="0.6" fill="#c43e1c"/>
  <path d="M365.6 364.6 V360 H367.4 A1.3 1.3 0 0 1 367.4 362.6 H365.6" fill="none" stroke="#fff" stroke-width="0.9"/>
  <!-- other app hex -->
  <g fill="none" stroke="#e8f1fa" stroke-width="1">
    <path d="M392.7 356.5 L397.6 359.5 V365.5 L392.7 368.5 L387.8 365.5 V359.5 Z"/>
    <path d="M390.2 360.5 C392.7 361.5 392.7 363.5 390.2 364.5 M395.2 360.5 C392.7 361.5 392.7 363.5 395.2 364.5" stroke="#6fb0e8" stroke-width="0.9"/>
  </g>
  <!-- tray -->
  <g fill="none" stroke="#fff" stroke-width="0.8">
    <path d="M540.6 363.8 L542.6 361.8 L544.6 363.8"/>
    <path d="M563.8 358 V363 A1.2 1.2 0 0 0 566.2 363 V358 Z M565 365 V366.5 M563.2 366.5 H566.8" stroke-width="0.9"/>
    <path d="M574 360.2 H581 V364.6 H574 Z M581 361.5 H582 V363.3 H581"/>
    <path d="M586 366 L593 359 V366 Z" stroke-width="0.6"/>
    <path d="M597.5 361 H599 L601.5 358.8 V366.2 L599 364 H597.5 Z M603 360.5 A3 3 0 0 1 603 364.5 M604.6 359.3 A4.8 4.8 0 0 1 604.6 365.7"/>
    <path d="M643.5 358.5 H650.5 V364.5 H647 L645.4 366.3 V364.5 H643.5 Z"/>
  </g>
  <path d="M550.5 365 H558 A1.9 1.9 0 0 0 557.5 361.3 A2.6 2.6 0 0 0 552.6 361 A2 2 0 0 0 550.5 365 Z" fill="#fff"/>
  <path d="M587 366 L592.4 360 V366 Z" fill="#9aa3ad"/>
</svg>

<svg class="a" style="left:0;top:76px" width="104" height="266" viewBox="0 76 104 266">
  <defs>
    <filter id="tb" x="-5%" y="-20%" width="110%" height="140%"><feGaussianBlur stdDeviation="0.3"/></filter>
    <filter id="tb2" x="-5%" y="-5%" width="110%" height="110%"><feGaussianBlur stdDeviation="0.5"/></filter>
  </defs>
  <!-- thumb 3 -->
  <rect x="17.6" y="85.8" width="68" height="50.6" fill="#fff" stroke="#d2d2d2" stroke-width="0.5"/>
  <!-- thumb 4 -->
  <rect x="17.2" y="146.8" width="68.5" height="50.8" fill="#e0dbc7"/>
  <!-- thumb 5 -->
  <rect x="17.2" y="208.2" width="68.5" height="50.4" fill="#e0dbc7"/>
  <rect x="17.8" y="218.3" width="40.2" height="18.8" fill="none" stroke="#5a564c" stroke-width="0.7" opacity="0.75"/>
  <g transform="rotate(-6.6 66.6 244.7)">
    <rect x="50.8" y="233.4" width="31.6" height="22.6" fill="#f8f6f0"/>
    <rect x="52" y="234.6" width="29.2" height="20.2" fill="#6a5550"/>
    <g filter="url(#tb)">
      <rect x="52" y="234.6" width="29.2" height="5" fill="#b4bec8"/>
      <path d="M60 234.6 L66 240 L72 234.6 Z" fill="#d8dde0"/>
      <circle cx="58.9" cy="247.0" r="1.2" fill="#7a5048"/><circle cx="65.7" cy="247.6" r="1.4" fill="#3a3a44"/><circle cx="59.5" cy="241.9" r="1.8" fill="#3a3a44"/><circle cx="67.7" cy="247.1" r="1.3" fill="#b89080"/><circle cx="58.7" cy="240.5" r="1.7" fill="#9a6a5a"/><circle cx="73.5" cy="249.1" r="1.0" fill="#a05a48"/><circle cx="79.8" cy="238.7" r="1.6" fill="#4a4a5a"/><circle cx="65.7" cy="249.9" r="1.7" fill="#d0b0a0"/><circle cx="74.9" cy="245.0" r="1.6" fill="#7a5048"/><circle cx="64.9" cy="253.4" r="1.7" fill="#a04a3a"/><circle cx="53.0" cy="246.2" r="1.1" fill="#5a6a80"/><circle cx="64.6" cy="248.3" r="1.2" fill="#c8a898"/><circle cx="76.2" cy="247.5" r="1.4" fill="#9a6a5a"/><circle cx="68.9" cy="252.9" r="1.5" fill="#8a3a30"/><circle cx="76.8" cy="254.4" r="1.5" fill="#b89080"/><circle cx="72.3" cy="243.4" r="1.4" fill="#7a5048"/><circle cx="68.5" cy="249.8" r="1.1" fill="#7a5048"/><circle cx="59.7" cy="240.1" r="1.3" fill="#5a6a80"/><circle cx="80.7" cy="239.5" r="1.6" fill="#9a6a5a"/><circle cx="78.0" cy="238.3" r="1.3" fill="#9a6a5a"/><circle cx="77.3" cy="238.7" r="1.5" fill="#8a3a30"/><circle cx="63.0" cy="247.7" r="1.4" fill="#4a4a5a"/><circle cx="66.7" cy="254.5" r="1.2" fill="#a04a3a"/><circle cx="55.1" cy="246.8" r="1.8" fill="#9a6a5a"/><circle cx="60.5" cy="242.3" r="1.5" fill="#c06a50"/><circle cx="61.1" cy="253.8" r="1.7" fill="#9a6a5a"/><circle cx="62.9" cy="252.4" r="1.2" fill="#7a5048"/><circle cx="71.7" cy="239.7" r="1.8" fill="#a05a48"/><circle cx="66.7" cy="245.1" r="1.5" fill="#6a6a7a"/><circle cx="79.2" cy="245.2" r="1.1" fill="#4a4a5a"/><circle cx="67.9" cy="238.2" r="1.3" fill="#7a5048"/><circle cx="61.1" cy="244.2" r="1.4" fill="#b89080"/><circle cx="53.7" cy="248.4" r="1.3" fill="#5a6a80"/><circle cx="78.6" cy="248.0" r="1.2" fill="#3a3a44"/><circle cx="52.6" cy="239.0" r="1.5" fill="#c06a50"/><circle cx="59.3" cy="245.5" r="1.4" fill="#c06a50"/><circle cx="57.1" cy="241.1" r="1.6" fill="#7a5048"/><circle cx="59.7" cy="251.0" r="1.0" fill="#8a3a30"/><circle cx="80.2" cy="249.3" r="1.0" fill="#c8a898"/><circle cx="58.5" cy="251.3" r="1.1" fill="#b89080"/><circle cx="71.7" cy="248.7" r="1.0" fill="#7a5048"/><circle cx="61.3" cy="243.5" r="1.7" fill="#3a3a44"/><circle cx="75.5" cy="253.9" r="1.0" fill="#d0b0a0"/><circle cx="70.9" cy="252.6" r="1.3" fill="#6a6a7a"/><circle cx="74.8" cy="238.6" r="1.8" fill="#c06a50"/><circle cx="75.4" cy="251.8" r="1.1" fill="#4a4a5a"/><circle cx="61.9" cy="251.7" r="1.0" fill="#7a5048"/><circle cx="62.0" cy="240.1" r="1.2" fill="#a05a48"/><circle cx="76.6" cy="245.7" r="1.5" fill="#4a4a5a"/><circle cx="64.2" cy="244.8" r="1.7" fill="#b89080"/><circle cx="57.8" cy="245.9" r="1.6" fill="#7a5048"/><circle cx="80.6" cy="245.2" r="1.8" fill="#d0b0a0"/><circle cx="58.4" cy="250.3" r="1.7" fill="#5a6a80"/><circle cx="73.7" cy="253.9" r="1.4" fill="#6a6a7a"/><circle cx="77.0" cy="252.2" r="1.8" fill="#a04a3a"/><circle cx="75.5" cy="238.7" r="1.7" fill="#d0b0a0"/><circle cx="66.9" cy="241.3" r="1.7" fill="#9a6a5a"/><circle cx="68.7" cy="238.2" r="1.6" fill="#b89080"/><circle cx="66.6" cy="241.9" r="0.9" fill="#c8a898"/><circle cx="64.0" cy="253.5" r="1.5" fill="#c06a50"/><circle cx="55.6" cy="254.0" r="1.4" fill="#a05a48"/><circle cx="74.7" cy="243.8" r="1.1" fill="#c8a898"/><circle cx="77.7" cy="240.0" r="1.1" fill="#4a4a5a"/><circle cx="78.7" cy="251.3" r="1.6" fill="#8a3a30"/><circle cx="66.1" cy="247.4" r="1.3" fill="#a05a48"/><circle cx="59.9" cy="242.4" r="1.4" fill="#9a6a5a"/><circle cx="53.5" cy="243.3" r="1.6" fill="#8a3a30"/><circle cx="74.5" cy="238.8" r="0.9" fill="#3a3a44"/><circle cx="80.3" cy="252.1" r="1.0" fill="#c8a898"/><circle cx="66.2" cy="240.6" r="1.0" fill="#9a6a5a"/>
    </g>
  </g>
  <!-- thumb 6 frame -->
  <rect x="15.8" y="268" width="71.2" height="53.6" fill="none" stroke="#c8421e" stroke-width="2.4"/>
  <rect x="17" y="269.2" width="68.9" height="51.2" fill="#f6f2ee"/>
  <!-- thumb 7 -->
  <rect x="17.2" y="330.2" width="68.5" height="20" fill="#e0dbc7"/>
  </svg>

<!-- thumb texts -->
<div class="a" style="left:44.00px;top:90.65px;width:12.00px;height:3.45px;font-size:3.0px;color:#111;font-family:'Liberation Serif',serif;line-height:3.45px;overflow:hidden;white-space:nowrap;font-weight:bold;-webkit-text-stroke:0.12px #111">Methods</div>
<div class="a" style="left:21.80px;top:97.94px;width:59.40px;height:2.01px;font-size:1.75px;color:#000;font-family:'Liberation Serif',serif;line-height:2.01px;overflow:hidden;text-align:justify;text-align-last:justify;font-weight:bold">In the XVII-XIX century at the time of Albanian great Patriarchies blooming in Shkodra and in Ioannina we face</div>
<div class="a" style="left:21.80px;top:99.87px;width:59.40px;height:2.01px;font-size:1.75px;color:#000;font-family:'Liberation Serif',serif;line-height:2.01px;overflow:hidden;text-align:justify;text-align-last:justify;font-weight:bold">ts and even separate institutions of the military education these are more obvious and precise in the Patriarc</div>
<div class="a" style="left:21.80px;top:101.80px;width:59.40px;height:2.01px;font-size:1.75px;color:#000;font-family:'Liberation Serif',serif;line-height:2.01px;overflow:hidden;text-align:justify;text-align-last:justify;font-weight:bold">try of Ioannina under the command Ali Pashe Tepelena it was he who gave the idea and tried to build the instit</div>
<div class="a" style="left:21.80px;top:103.73px;width:59.40px;height:2.01px;font-size:1.75px;color:#000;font-family:'Liberation Serif',serif;line-height:2.01px;overflow:hidden;text-align:justify;text-align-last:justify;font-weight:bold">f the military education Ali Pasha encouraged supported and pushed into projects scheduled courses about milit</div>
<div class="a" style="left:21.80px;top:105.66px;width:59.40px;height:2.01px;font-size:1.75px;color:#000;font-family:'Liberation Serif',serif;line-height:2.01px;overflow:hidden;text-align:justify;text-align-last:justify;font-weight:bold">cation like the reverse artillery etc In the XVII-XIX century at the time of Albanian great Patriarchies bloom</div>
<div class="a" style="left:21.80px;top:107.59px;width:59.40px;height:2.01px;font-size:1.75px;color:#000;font-family:'Liberation Serif',serif;line-height:2.01px;overflow:hidden;text-align:justify;text-align-last:justify;font-weight:bold">Shkodra and in Ioannina we face elements and even separate institutions of the military education these are mo</div>
<div class="a" style="left:21.80px;top:109.52px;width:59.40px;height:2.01px;font-size:1.75px;color:#000;font-family:'Liberation Serif',serif;line-height:2.01px;overflow:hidden;text-align:justify;text-align-last:justify;font-weight:bold">ous and precise in the Patriarchy country of Ioannina under the command Ali Pashe Tepelena it was he who gave</div>
<div class="a" style="left:21.80px;top:111.45px;width:59.40px;height:2.01px;font-size:1.75px;color:#000;font-family:'Liberation Serif',serif;line-height:2.01px;overflow:hidden;text-align:justify;text-align-last:justify;font-weight:bold">a and tried to build the institution of the military education Ali Pasha encouraged supported and pushed into</div>
<div class="a" style="left:21.80px;top:113.38px;width:59.40px;height:2.01px;font-size:1.75px;color:#000;font-family:'Liberation Serif',serif;line-height:2.01px;overflow:hidden;text-align:justify;text-align-last:justify;font-weight:bold">s scheduled courses about military education like the reverse artillery etc In the XVII-XIX century at the tim</div>
<div class="a" style="left:21.80px;top:115.31px;width:59.40px;height:2.01px;font-size:1.75px;color:#000;font-family:'Liberation Serif',serif;line-height:2.01px;overflow:hidden;text-align:justify;text-align-last:justify;font-weight:bold">banian great Patriarchies blooming in Shkodra and in Ioannina we face elements and even separate institutions</div>
<div class="a" style="left:21.80px;top:117.24px;width:59.40px;height:2.01px;font-size:1.75px;color:#000;font-family:'Liberation Serif',serif;line-height:2.01px;overflow:hidden;text-align:justify;text-align-last:justify;font-weight:bold">military education these are more obvious and precise in the Patriarchy country of Ioannina under the command</div>
<div class="a" style="left:21.80px;top:119.17px;width:59.40px;height:2.01px;font-size:1.75px;color:#000;font-family:'Liberation Serif',serif;line-height:2.01px;overflow:hidden;text-align:justify;text-align-last:justify;font-weight:bold">he Tepelena it was he who gave the idea and tried to build the institution of the military education Ali Pasha</div>
<div class="a" style="left:21.80px;top:121.10px;width:59.40px;height:2.01px;font-size:1.75px;color:#000;font-family:'Liberation Serif',serif;line-height:2.01px;overflow:hidden;text-align:justify;text-align-last:justify;font-weight:bold">aged supported and pushed into projects scheduled courses about military education like the reverse artillery</div>
<div class="a" style="left:21.80px;top:123.03px;width:49.00px;height:2.01px;font-size:1.75px;color:#000;font-family:'Liberation Serif',serif;line-height:2.01px;overflow:hidden;white-space:nowrap;font-weight:bold">the XVII-XIX century at the time of Albanian great Patriarch</div>
<div class="a" style="left:25.00px;top:149.52px;width:53.00px;height:4.14px;font-size:3.6px;color:#5a564c;font-family:'Liberation Sans',sans-serif;line-height:4.14px;overflow:hidden;text-align:justify;text-align-last:justify;">1.&nbsp;&nbsp;&nbsp;&nbsp;Historical experience of the</div>
<div class="a" style="left:23.00px;top:154.32px;width:57.00px;height:4.14px;font-size:3.6px;color:#5a564c;font-family:'Liberation Sans',sans-serif;line-height:4.14px;overflow:hidden;text-align:justify;text-align-last:justify;">Albanian army in the Middle Ages</div>
<div class="a" style="left:21.80px;top:161.22px;width:62.00px;height:1.84px;font-size:1.6px;color:#6a665a;font-family:'Liberation Sans',sans-serif;line-height:1.84px;overflow:hidden;text-align:justify;text-align-last:justify;">oming in Shkodra and in Ioannina we face elements and even separate institutions of the military edu</div>
<div class="a" style="left:21.80px;top:163.12px;width:62.00px;height:1.84px;font-size:1.6px;color:#6a665a;font-family:'Liberation Sans',sans-serif;line-height:1.84px;overflow:hidden;text-align:justify;text-align-last:justify;">these are more obvious and precise in the Patriarchy country of Ioannina under the command Ali Pashe</div>
<div class="a" style="left:21.80px;top:165.12px;width:8.50px;height:1.84px;font-size:1.6px;color:#6a665a;font-family:'Liberation Sans',sans-serif;line-height:1.84px;overflow:hidden;white-space:nowrap;">na it was h</div>
<div class="a" style="left:21.80px;top:171.32px;width:52.00px;height:1.84px;font-size:1.6px;color:#6a665a;font-family:'Liberation Sans',sans-serif;line-height:1.84px;overflow:hidden;white-space:nowrap;">ave the idea and tried to build the institution of the military educa</div>
<div class="a" style="left:21.80px;top:186.82px;width:58.00px;height:1.84px;font-size:1.6px;color:#6a665a;font-family:'Liberation Sans',sans-serif;line-height:1.84px;overflow:hidden;text-align:justify;text-align-last:justify;">i Pasha encouraged supported and pushed into projects scheduled courses about military education lik</div>
<div class="a" style="left:21.80px;top:189.32px;width:13.00px;height:1.84px;font-size:1.6px;color:#6a665a;font-family:'Liberation Sans',sans-serif;line-height:1.84px;overflow:hidden;white-space:nowrap;">everse artillery</div>
<div class="a" style="left:21.80px;top:176.56px;width:62.00px;height:2.18px;font-size:1.9px;color:#111;font-family:'Liberation Sans',sans-serif;line-height:2.18px;overflow:hidden;text-align:justify;text-align-last:justify;font-weight:bold;text-decoration:underline;-webkit-text-stroke:0.1px #111">the XVII-XIX century at the time of Albanian great Patriarchies blooming in Shkodra and in</div>
<div class="a" style="left:21.80px;top:179.16px;width:62.00px;height:2.18px;font-size:1.9px;color:#111;font-family:'Liberation Sans',sans-serif;line-height:2.18px;overflow:hidden;text-align:justify;text-align-last:justify;font-weight:bold;text-decoration:underline;-webkit-text-stroke:0.1px #111">na we face elements and even separate institutions of the military education these are mor</div>
<div class="a" style="left:21.80px;top:181.76px;width:19.00px;height:2.18px;font-size:1.9px;color:#111;font-family:'Liberation Sans',sans-serif;line-height:2.18px;overflow:hidden;white-space:nowrap;font-weight:bold;text-decoration:underline;-webkit-text-stroke:0.1px #111">us and precise in the</div>
<div class="a" style="left:19.6px;top:161.70px;width:0.7px;height:0.7px;background:#8a8578"></div>
<div class="a" style="left:19.6px;top:171.80px;width:0.7px;height:0.7px;background:#8a8578"></div>
<div class="a" style="left:19.6px;top:177.20px;width:0.7px;height:0.7px;background:#8a8578"></div>
<div class="a" style="left:19.6px;top:187.30px;width:0.7px;height:0.7px;background:#8a8578"></div>
<div class="a" style="left:21.80px;top:211.71px;width:1.50px;height:2.07px;font-size:1.8px;color:#55524a;font-family:'Liberation Sans',sans-serif;line-height:2.07px;overflow:hidden;white-space:nowrap;">1.</div>
<div class="a" style="left:29.00px;top:211.66px;width:51.50px;height:2.18px;font-size:1.9px;color:#55524a;font-family:'Liberation Sans',sans-serif;line-height:2.18px;overflow:hidden;text-align:justify;text-align-last:justify;">Historical experience of the Albanian army in the</div>
<div class="a" style="left:47.00px;top:214.86px;width:12.00px;height:2.18px;font-size:1.9px;color:#55524a;font-family:'Liberation Sans',sans-serif;line-height:2.18px;overflow:hidden;white-space:nowrap;">middle Ages</div>
<div class="a" style="left:19.00px;top:218.20px;width:38.00px;height:2.30px;font-size:2.0px;color:#1a1a1a;font-family:'Liberation Sans',sans-serif;line-height:2.30px;overflow:hidden;text-align:justify;text-align-last:justify;font-weight:bold">rchy country of Ioannina under the command Ali Pashe Tepelena it was h</div>
<div class="a" style="left:19.00px;top:220.78px;width:38.00px;height:2.30px;font-size:2.0px;color:#1a1a1a;font-family:'Liberation Sans',sans-serif;line-height:2.30px;overflow:hidden;text-align:justify;text-align-last:justify;font-weight:bold">ave the idea and tried to build the institution of the military educat</div>
<div class="a" style="left:19.00px;top:223.36px;width:38.00px;height:2.30px;font-size:2.0px;color:#1a1a1a;font-family:'Liberation Sans',sans-serif;line-height:2.30px;overflow:hidden;text-align:justify;text-align-last:justify;font-weight:bold">Pasha encouraged supported and pushed into projects scheduled courses</div>
<div class="a" style="left:19.00px;top:225.94px;width:38.00px;height:2.30px;font-size:2.0px;color:#1a1a1a;font-family:'Liberation Sans',sans-serif;line-height:2.30px;overflow:hidden;text-align:justify;text-align-last:justify;font-weight:bold">military education like the reverse artillery etc In the XVII-XIX cent</div>
<div class="a" style="left:19.00px;top:228.52px;width:38.00px;height:2.30px;font-size:2.0px;color:#1a1a1a;font-family:'Liberation Sans',sans-serif;line-height:2.30px;overflow:hidden;text-align:justify;text-align-last:justify;font-weight:bold">the time of Albanian great Patriarchies blooming in Shkodra and in Ioa</div>
<div class="a" style="left:19.00px;top:231.10px;width:38.00px;height:2.30px;font-size:2.0px;color:#1a1a1a;font-family:'Liberation Sans',sans-serif;line-height:2.30px;overflow:hidden;text-align:justify;text-align-last:justify;font-weight:bold">e face elements and even separate institutions of the military educati</div>
<div class="a" style="left:35.50px;top:335.97px;width:30.00px;height:2.99px;font-size:2.6px;color:#6a665a;font-family:'Liberation Sans',sans-serif;line-height:2.99px;overflow:hidden;white-space:nowrap;">The Albanian army, 1913</div>

<!-- thumb 6 content -->
<div class="a" style="left:17.2px;top:269.3px;width:316.7px;height:236.4px;transform:scale(0.2163);transform-origin:0 0;background:#dfdac6;overflow:hidden">
<div class="t" style="left:10.30px;top:23.13px;font-size:13.2px;color:#6a675e;-webkit-text-stroke-width:0px">2.</div>
<div class="t" style="left:42.10px;top:23.13px;font-size:13.2px;color:#6a675e;-webkit-text-stroke-width:0px;transform:scaleX(0.992)">The Albanian army from the 17<span style="font-size:0.62em;vertical-align:0.55em">th</span>-19th century</div>
<div class="sl" style="left:12.00px;top:58.97px;width:177.3px;font-size:8.75px;text-align:justify;text-align-last:justify">•In the XVII-XIX century, at the time of Albanian</div>
<div class="sl" style="left:12.00px;top:69.57px;width:177.3px;font-size:8.75px;text-align:justify;text-align-last:justify">great Patriarchies blooming in Shkodra in (1757-</div>
<div class="sl" style="left:12.00px;top:80.07px;width:177.3px;font-size:8.75px;text-align:justify;text-align-last:justify">1931) and in Ioannina in (1786-1822) we face</div>
<div class="sl" style="left:12.00px;top:90.37px;width:177.3px;font-size:8.75px;text-align:justify;text-align-last:justify">elements and even separate institutions of the</div>
<div class="sl" style="left:12.00px;top:100.77px;width:177.3px;font-size:8.75px">military education.</div>
<div class="sl" style="left:12.00px;top:113.97px;width:177.3px;font-size:8.75px;text-align:justify;text-align-last:justify">•These are more obvious and precise in the</div>
<div class="sl" style="left:12.00px;top:124.57px;width:177.3px;font-size:8.75px;text-align:justify;text-align-last:justify">Patriarchy country of Ioannina under the</div>
<div class="sl" style="left:12.00px;top:135.07px;width:177.3px;font-size:8.75px">command Ali Pashe Tepelena.</div>
<div class="sl" style="left:12.00px;top:148.07px;width:177.3px;font-size:8.75px;text-align:justify;text-align-last:justify">•It was he who gave the idea and tried to build the</div>
<div class="sl" style="left:12.00px;top:158.07px;width:177.3px;font-size:8.75px">institution of the military education.</div>
<div class="sl" style="left:12.00px;top:171.57px;width:177.3px;font-size:8.75px;text-align:justify;text-align-last:justify">•Ali Pasha encouraged, supported and pushed into</div>
<div class="sl" style="left:12.00px;top:182.07px;width:177.3px;font-size:8.75px;text-align:justify;text-align-last:justify">projects scheduled courses about military</div>
<div class="sl" style="left:12.00px;top:192.07px;width:177.3px;font-size:8.75px">education like the reverse artillery, etc.</div>
<div class="a" style="left:0;top:0;width:316.7px;height:236.4px;background:#dfdac6;opacity:0.3"></div>
<svg class="a" style="left:198.20px;top:60.70px;overflow:visible" width="115" height="176" viewBox="0 0 115 176">
  <use href="#portrait" clip-path="url(#pc)"/>
  <g mask="url(#rmask)" transform="translate(0,141)">
    <g transform="translate(0,139) scale(1,-1)"><use href="#portrait" clip-path="url(#pc)"/></g>
  </g>
</svg>
</div>
<!-- cursor -->
<svg class="a" style="left:35.5px;top:301.5px" width="8" height="12" viewBox="0 0 8 12"><path d="M0.5 0.5 V9.6 L2.7 7.6 L4.2 10.9 L5.6 10.3 L4.1 7.1 L7 7.1 Z" fill="#fff" stroke="#1a1a1a" stroke-width="0.6"/></svg>

<!-- main slide -->
<div class="a" id="slide" style="left:222.3px;top:79.7px;width:316.7px;height:236.4px;background:#dfdac6;box-shadow:0.5px 0.8px 0.6px rgba(0,0,0,0.15)">
<div class="t" style="left:10.30px;top:23.13px;font-size:13.2px;color:#161616;-webkit-text-stroke-width:0.3px">2.</div>
<div class="t" style="left:42.10px;top:23.13px;font-size:13.2px;color:#161616;-webkit-text-stroke-width:0.3px;transform:scaleX(0.992)">The Albanian army from the 17<span style="font-size:0.62em;vertical-align:0.55em">th</span>-19th century</div>
<div class="sl" style="left:12.00px;top:58.97px;width:177.3px;font-size:8.75px;text-align:justify;text-align-last:justify">•In the XVII-XIX century, at the time of Albanian</div>
<div class="sl" style="left:12.00px;top:69.57px;width:177.3px;font-size:8.75px;text-align:justify;text-align-last:justify">great Patriarchies blooming in Shkodra in (1757-</div>
<div class="sl" style="left:12.00px;top:80.07px;width:177.3px;font-size:8.75px;text-align:justify;text-align-last:justify">1931) and in Ioannina in (1786-1822) we face</div>
<div class="sl" style="left:12.00px;top:90.37px;width:177.3px;font-size:8.75px;text-align:justify;text-align-last:justify">elements and even separate institutions of the</div>
<div class="sl" style="left:12.00px;top:100.77px;width:177.3px;font-size:8.75px">military education.</div>
<div class="sl" style="left:12.00px;top:113.97px;width:177.3px;font-size:8.75px;text-align:justify;text-align-last:justify">•These are more obvious and precise in the</div>
<div class="sl" style="left:12.00px;top:124.57px;width:177.3px;font-size:8.75px;text-align:justify;text-align-last:justify">Patriarchy country of Ioannina under the</div>
<div class="sl" style="left:12.00px;top:135.07px;width:177.3px;font-size:8.75px">command Ali Pashe Tepelena.</div>
<div class="sl" style="left:12.00px;top:148.07px;width:177.3px;font-size:8.75px;text-align:justify;text-align-last:justify">•It was he who gave the idea and tried to build the</div>
<div class="sl" style="left:12.00px;top:158.07px;width:177.3px;font-size:8.75px">institution of the military education.</div>
<div class="sl" style="left:12.00px;top:171.57px;width:177.3px;font-size:8.75px;text-align:justify;text-align-last:justify">•Ali Pasha encouraged, supported and pushed into</div>
<div class="sl" style="left:12.00px;top:182.07px;width:177.3px;font-size:8.75px;text-align:justify;text-align-last:justify">projects scheduled courses about military</div>
<div class="sl" style="left:12.00px;top:192.07px;width:177.3px;font-size:8.75px">education like the reverse artillery, etc.</div>

<svg class="a" style="left:198.20px;top:60.70px;overflow:visible" width="115" height="176" viewBox="0 0 115 176">
<defs>
  <filter id="pb" x="-5%" y="-5%" width="110%" height="110%"><feGaussianBlur stdDeviation="1.6"/></filter>
  <filter id="pb2" x="-5%" y="-5%" width="110%" height="110%"><feGaussianBlur stdDeviation="0.7"/></filter>
  <filter id="pb3" x="-10%" y="-10%" width="120%" height="120%"><feGaussianBlur stdDeviation="1.1"/></filter>
  <clipPath id="pc"><rect x="0" y="0" width="114.3" height="139" rx="8" ry="8"/></clipPath>
  <linearGradient id="pbg" x1="0" y1="0" x2="1" y2="0">
    <stop offset="0" stop-color="#433429"/><stop offset="0.35" stop-color="#4f3c2e"/><stop offset="0.6" stop-color="#6a4e3a"/><stop offset="1" stop-color="#765640"/>
  </linearGradient>
  <linearGradient id="rfade" x1="0" y1="0" x2="0" y2="1">
    <stop offset="0" stop-color="#fff" stop-opacity="0.24"/><stop offset="0.8" stop-color="#fff" stop-opacity="0.04"/><stop offset="1" stop-color="#fff" stop-opacity="0"/>
  </linearGradient>
  <mask id="rmask"><rect x="0" y="0" width="114.3" height="36" fill="url(#rfade)"/></mask>
  <g id="portrait">
    <rect x="0" y="0" width="114.3" height="139" fill="url(#pbg)"/>
    <g filter="url(#pb)">
      <path d="M0 0 H14 V139 H0 Z" fill="#3a2c22" opacity="0.8"/>
      <path d="M20 5 L24 5 L26 80 L21 80 Z" fill="#5e4a3a" opacity="0.6"/>
      <path d="M74 10 C88 13 100 11 114 15 L114 20 C100 17 88 19 74 16 Z" fill="#4a3424" opacity="0.55"/>
      <path d="M76 24 C90 27 102 25 114 29 L114 34 C100 31 90 33 76 30 Z" fill="#4a3424" opacity="0.5"/>
      <path d="M78 38 C92 41 104 39 114 43 L114 48 C102 45 92 47 80 44 Z" fill="#4a3424" opacity="0.5"/>
      <path d="M80 52 C94 55 104 53 114 57 L114 62 C104 59 94 61 82 58 Z" fill="#4a3424" opacity="0.45"/>
      <!-- fur / cloak -->
      <path d="M0 139 V100 C4 84 14 70 28 62 C36 57 46 55 56 55 C70 55 84 58 96 66 C106 74 112 84 114.3 92 V139 Z" fill="#4a2e20"/>
      <path d="M0 139 V96 C6 86 14 78 22 74 L30 88 C22 104 16 120 14 139 Z" fill="#2e1e16"/>
      <path d="M8 100 C14 90 20 84 26 80 L28 86 C22 92 16 100 12 108 Z" fill="#6a4a38" opacity="0.7"/>
      <path d="M84 60 C96 64 108 76 114.3 90 V108 C108 94 98 82 86 72 Z" fill="#32201a"/>
      <!-- robe -->
      <path d="M24 139 C26 118 34 98 46 86 C56 80 70 82 80 90 C92 100 102 116 108 139 Z" fill="#6a2a1c"/>
      <path d="M44 139 C48 122 56 106 66 96 C78 104 90 120 96 139 Z" fill="#883020"/>
      <path d="M52 106 C62 100 74 102 84 110 C92 116 98 122 102 130 L96 134 C88 122 76 112 62 112 Z" fill="#a83a22" opacity="0.75"/>
      <path d="M60 122 C70 118 80 122 90 132 L86 139 H64 Z" fill="#9a3420" opacity="0.7"/>
      <path d="M26 139 C30 128 36 118 44 112 L48 120 C42 126 38 132 36 139 Z" fill="#4a1e14" opacity="0.8"/>
      <!-- hand -->
      <path d="M92 112 C98 108 108 108 114.3 111 V123 C108 125 100 124 93 120 Z" fill="#c98e6e"/>
      <!-- beard -->
      <path d="M44 86 C48 92 60 92 66 86 L62 104 C58 108 50 108 46 104 Z" fill="#a87056" opacity="0.75"/>
    </g>
    <g filter="url(#pb3)">
      <path d="M37 52 C35 56 32 62 32 70 C33 80 38 88 44 94 C48 99 52 102 55 103 C58 100 62 94 66 88 C71 80 74 72 73 62 C72 56 69 52 66 51 Z" fill="#cdb898"/>
      <path d="M40 54 C38 60 37 68 38 76 C40 84 46 92 54 97 C58 92 64 84 67 76 C69 68 68 60 65 54 Z" fill="#dacab0"/>
      <path d="M44 58 C43 66 44 74 48 82 C50 86 53 90 55 92 C56 84 56 72 54 60 Z" fill="#e8dece" opacity="0.9"/>
      <path d="M58 60 C60 70 60 78 58 86 L62 80 C65 72 65 64 63 58 Z" fill="#e2d6c2" opacity="0.8"/>
    </g>
    <g filter="url(#pb2)">
      <!-- face -->
      <path d="M39.5 38 C39.5 35 46 34 55.5 34 C65 34 71 35 71 38 L70 47 C69 53 63 55 55.5 55 C48 55 41.5 53 40.5 47 Z" fill="#b68468"/>
      <path d="M44 37 C48 35.5 62 35.5 66 37 L65 42 C60 40 50 40 45 42 Z" fill="#cfa282"/>
      <path d="M64 40 C68 40 71 43 71 47 L68 52 C66 48 65 44 64 40 Z" fill="#d4ae8c"/>
      <path d="M42.5 42.6 H49.5 M53.5 42.6 H61.5" stroke="#4e2c20" stroke-width="1.5"/>
      <path d="M50.8 43.5 L49.8 50.5 L53 51" fill="none" stroke="#7a4632" stroke-width="1.2"/>
      <path d="M42 52 C48 49.5 60 49.5 66 52 L64 56 C58 54.5 50 54.5 44 56 Z" fill="#d8c6ac"/>
      <!-- hat -->
      <path d="M39.5 35.5 C38.5 23 45 16 55.5 16 C66 16 72.5 23 72 35.5 Z" fill="#3c2a1e"/>
      <g stroke="#c2a27a" stroke-width="2.3">
        <path d="M42.5 33 L44.2 23 M47.5 33 L48.6 19.5 M52.6 33 L53.2 17.6 M57.8 33 L57.8 17.6 M62.8 33 L62.2 19 M67.8 33 L66.5 22.5"/>
      </g>
      <path d="M39 31 C48 29 63 29 72.5 31 L72.5 36.5 C63 34.5 48 34.5 39 36.5 Z" fill="#b09070"/>
    </g>
  </g>
</defs>

  <use href="#portrait" clip-path="url(#pc)"/>
  <g mask="url(#rmask)" transform="translate(0,141)">
    <g transform="translate(0,139) scale(1,-1)"><use href="#portrait" clip-path="url(#pc)"/></g>
  </g>
</svg>
</div>

<div class="t" id="ttl" style="left:211.00px;top:4.84px;font-size:6.8px;color:#fff;transform:scaleX(0.840)">PP. Dr. Edit Bregu Barcelona Conference 06 June 2021.ppt [Compatibility Mode]&nbsp; -&nbsp; PowerPoint</div>
<div class="t" id="uname" style="left:525.00px;top:4.84px;font-size:6.8px;color:#fff;transform:scaleX(0.841)">Edit Bregu</div>
<div class="t" id="eb" style="left:559.00px;top:6.26px;font-size:5.6px;color:#9a9a9a;transform:scaleX(0.798);-webkit-text-stroke-width:0;letter-spacing:0.4px">EB</div>
<div class="t" id="tab0" style="left:9.75px;top:21.00px;font-size:6.5px;color:#fff;transform:scaleX(0.830)">File</div>
<div class="t" id="tab1" style="left:36.00px;top:21.00px;font-size:6.5px;color:#b5472b;transform:scaleX(0.888)">Home</div>
<div class="t" id="tab2" style="left:64.60px;top:21.00px;font-size:6.5px;color:#fff;transform:scaleX(0.867)">Insert</div>
<div class="t" id="tab3" style="left:91.80px;top:21.00px;font-size:6.5px;color:#fff;transform:scaleX(0.860)">Design</div>
<div class="t" id="tab4" style="left:122.25px;top:21.00px;font-size:6.5px;color:#fff;transform:scaleX(0.871)">Transitions</div>
<div class="t" id="tab5" style="left:162.75px;top:21.00px;font-size:6.5px;color:#fff;transform:scaleX(0.917)">Animations</div>
<div class="t" id="tab6" style="left:205.50px;top:21.00px;font-size:6.5px;color:#fff;transform:scaleX(0.845)">Slide Show</div>
<div class="t" id="tab7" style="left:246.00px;top:21.00px;font-size:6.5px;color:#fff;transform:scaleX(0.868)">Review</div>
<div class="t" id="tab8" style="left:277.00px;top:21.00px;font-size:6.5px;color:#fff;transform:scaleX(0.894)">View</div>
<div class="t" id="tab9" style="left:303.00px;top:21.00px;font-size:6.5px;color:#fff;transform:scaleX(0.897)">Help</div>
<div class="t" id="tab10" style="left:342.00px;top:21.00px;font-size:6.5px;color:#fff;transform:scaleX(0.898)">Tell me what you want to do</div>
<div class="t" id="tab11" style="left:638.00px;top:21.00px;font-size:6.5px;color:#fff;transform:scaleX(0.806)">Share</div>
<div class="t" id="paste" style="left:7.30px;top:52.25px;font-size:6.5px;color:#333;transform:scaleX(0.812)">Paste</div>
<div class="t" id="new" style="left:54.70px;top:52.25px;font-size:6.5px;color:#333;transform:scaleX(0.914)">New</div>
<div class="t" id="slide" style="left:52.00px;top:59.90px;font-size:6.5px;color:#333;transform:scaleX(0.857)">Slide</div>
<div class="t" id="clip" style="left:7.30px;top:69.07px;font-size:6.3px;color:#555;transform:scaleX(0.868)">Clipboard</div>
<div class="t" id="layout" style="left:81.70px;top:36.40px;font-size:6.5px;color:#333;transform:scaleX(0.896)">Layout</div>
<div class="t" id="reset" style="left:82.00px;top:47.30px;font-size:6.5px;color:#333;transform:scaleX(0.765)">Reset</div>
<div class="t" id="section" style="left:82.00px;top:58.20px;font-size:6.5px;color:#b3b3b3;transform:scaleX(0.876)">Section</div>
<div class="t" id="slides" style="left:72.00px;top:69.07px;font-size:6.3px;color:#555;transform:scaleX(0.874)">Slides</div>
<div class="t" id="fsz" style="left:192.90px;top:39.52px;font-size:6px;color:#b0b0b0;transform:scaleX(0.927)">20</div>
<div class="t" id="font" style="left:175.00px;top:69.07px;font-size:6.3px;color:#555;transform:scaleX(0.872)">Font</div>
<div class="t" id="para" style="left:322.00px;top:69.07px;font-size:6.3px;color:#555;transform:scaleX(0.850)">Paragraph</div>
<div class="t" id="tdir" style="left:357.00px;top:36.40px;font-size:6.5px;color:#b3b3b3;transform:scaleX(0.889)">Text Direction</div>
<div class="t" id="atext" style="left:357.00px;top:47.30px;font-size:6.5px;color:#b3b3b3;transform:scaleX(0.890)">Align Text</div>
<div class="t" id="smart" style="left:357.00px;top:58.20px;font-size:6.5px;color:#b3b3b3;transform:scaleX(0.888)">Convert to SmartArt</div>
<div class="t" id="arr" style="left:494.00px;top:52.25px;font-size:6.5px;color:#333;transform:scaleX(0.865)">Arrange</div>
<div class="t" id="draw" style="left:494.00px;top:69.07px;font-size:6.3px;color:#555;transform:scaleX(0.909)">Drawing</div>
<div class="t" id="quick" style="left:520.00px;top:52.25px;font-size:6.5px;color:#b3b3b3;transform:scaleX(0.842)">Quick</div>
<div class="t" id="styles" style="left:517.00px;top:59.90px;font-size:6.5px;color:#b3b3b3;transform:scaleX(0.763)">Styles</div>
<div class="t" id="sfill" style="left:549.00px;top:36.40px;font-size:6.5px;color:#b3b3b3;transform:scaleX(0.830)">Shape Fill</div>
<div class="t" id="sout" style="left:549.00px;top:47.30px;font-size:6.5px;color:#b3b3b3;transform:scaleX(0.874)">Shape Outline</div>
<div class="t" id="seff" style="left:549.00px;top:58.20px;font-size:6.5px;color:#b3b3b3;transform:scaleX(0.842)">Shape Effects</div>
<div class="t" id="find" style="left:610.00px;top:36.40px;font-size:6.5px;color:#333;transform:scaleX(1.027)">Find</div>
<div class="t" id="repl" style="left:610.00px;top:47.30px;font-size:6.5px;color:#333;transform:scaleX(0.880)">Replace</div>
<div class="t" id="sel" style="left:610.00px;top:58.20px;font-size:6.5px;color:#333;transform:scaleX(0.940)">Select</div>
<div class="t" id="edit" style="left:613.00px;top:69.07px;font-size:6.3px;color:#555;transform:scaleX(0.934)">Editing</div>
<div class="t" id="n3" style="left:6.20px;top:84.07px;font-size:8.6px;color:#555">3</div>
<div class="t" id="n4" style="left:6.00px;top:145.22px;font-size:8.6px;color:#555">4</div>
<div class="t" id="n5" style="left:6.00px;top:206.72px;font-size:8.6px;color:#555">5</div>
<div class="t" id="n6" style="left:5.70px;top:267.72px;font-size:8.6px;color:#d24726">6</div>
<div class="t" id="n7" style="left:6.10px;top:328.62px;font-size:8.6px;color:#555">7</div>
<div class="t" id="notes" style="left:110.70px;top:330.87px;font-size:7px;color:#555;transform:scaleX(1.015)">Click to add notes</div>
<div class="t" id="sl6" style="left:3.90px;top:346.34px;font-size:5.5px;color:#444;transform:scaleX(1.017)">Slide 6 of 20</div>
<div class="t" id="snotes" style="left:422.00px;top:346.84px;font-size:5.5px;color:#444;transform:scaleX(0.974)">Notes</div>
<div class="t" id="scomm" style="left:454.50px;top:346.84px;font-size:5.5px;color:#444;transform:scaleX(0.978)">Comments</div>
<div class="t" id="szoom" style="left:638.00px;top:347.27px;font-size:5px;color:#444">68%</div>
<div class="t" id="search" style="left:43.00px;top:361.24px;font-size:6.8px;color:#333;transform:scaleX(1.032)">Type here to search</div>
<div class="t" id="time" style="left:611.00px;top:356.74px;font-size:5.5px;color:#fff;transform:scaleX(1.007)">11:50 AM</div>
<div class="t" id="date" style="left:611.00px;top:365.84px;font-size:5.5px;color:#fff;transform:scaleX(1.027)">6/6/2021</div>
</div>
</body></html>
